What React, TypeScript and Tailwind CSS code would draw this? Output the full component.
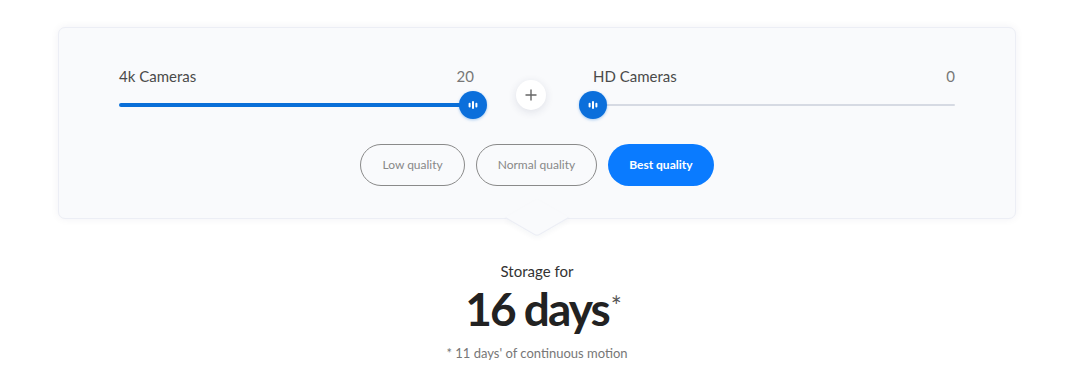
function ThumbIcon() {
  return (
    <svg width="14" height="14" viewBox="0 0 14 14" fill="none">
      <rect x="2.6" y="4.8" width="2" height="4.6" rx="1" fill="#fff" />
      <rect x="6" y="3" width="2" height="8" rx="1" fill="#fff" />
      <rect x="9.4" y="4.8" width="2" height="4.6" rx="1" fill="#fff" />
    </svg>
  );
}

function Thumb({ className }: { className: string }) {
  return (
    <div
      className={`absolute top-0 flex h-7 w-7 items-center justify-center rounded-full bg-[#0b6fdb] shadow-[0_1px_3px_rgba(11,111,219,0.35)] ${className}`}
    >
      <ThumbIcon />
    </div>
  );
}

const qualities = [
  { label: 'Low quality', active: false },
  { label: 'Normal quality', active: false },
  { label: 'Best quality', active: true },
];

export default function App() {
  return (
    <div className="min-h-[378px] w-[1086px] bg-white font-['Lato',sans-serif]">
      <div className="w-[1074px] px-[58px] pt-[27px]">
        <div className="relative rounded-[7px] border border-[#eceef5] bg-[#f9fafc] shadow-[0_0_8px_rgba(30,40,80,0.06)]">
          <div className="relative z-10 flex items-start px-[60px] pt-[38px]">
            <div className="w-[368px]">
              <div className="flex justify-between pr-[13px] text-[15px] leading-5">
                <span className="text-[#4a4a4a]">4k Cameras</span>
                <span className="text-[#777]">20</span>
              </div>
              <div className="relative mt-[5px] h-7">
                <div className="absolute left-0 right-[14px] top-[12px] h-1 rounded-full bg-[#0a6fd8]" />
                <Thumb className="right-0" />
              </div>
            </div>
            <div className="flex w-[92px] justify-center pr-[4px] pt-[14px]">
              <div className="flex h-[30px] w-[30px] items-center justify-center rounded-full bg-white shadow-[0_2px_8px_rgba(30,40,80,0.12)]">
                <svg width="12" height="12" viewBox="0 0 12 12">
                  <path d="M6 0.5v11M0.5 6h11" stroke="#666" strokeWidth="1.4" />
                </svg>
              </div>
            </div>
            <div className="w-[376px]">
              <div className="flex justify-between pl-[14px] text-[15px] leading-5">
                <span className="text-[#4a4a4a]">HD Cameras</span>
                <span className="text-[#777]">0</span>
              </div>
              <div className="relative mt-[5px] h-7">
                <div className="absolute left-[14px] right-0 top-[13px] h-[2px] rounded-full bg-[#d6dae3]" />
                <Thumb className="left-0" />
              </div>
            </div>
          </div>
          <div className="relative z-10 flex justify-center gap-[11px] pb-[32px] pt-[25px]">
            {qualities.map((q) => (
              <button
                key={q.label}
                type="button"
                className={
                  q.active
                    ? 'h-[42px] rounded-full bg-[#0a7bff] px-[21px] text-[12px] font-bold text-white'
                    : 'h-[42px] rounded-full border border-[#8a8a8a] bg-transparent px-[21px] text-[12px] text-[#888]'
                }
              >
                {q.label}
              </button>
            ))}
          </div>
          <div className="absolute bottom-[-33px] left-[445px] flex h-[66px] w-[66px] scale-y-[0.58] items-center justify-center">
            <div className="h-[46px] w-[46px] rotate-45 rounded-br-[5px] border-b-2 border-r-2 border-[#eceef5] bg-[#f9fafc] shadow-[3px_3px_6px_rgba(30,40,80,0.04)]" />
          </div>
        </div>
        <div className="flex flex-col items-center pt-[42px]">
          <p className="text-[15px] leading-5 text-[#333]">Storage for</p>
          <div className="relative">
            <span className="text-[46px] font-bold leading-[56px] tracking-[-2px] text-[#222]">16 days</span>
            <span className="absolute left-full top-[13px] ml-[2px] text-[26px] leading-6 text-[#555]">*</span>
          </div>
          <p className="mt-[8px] text-[13px] leading-4 text-[#777]">* 11 days' of continuous motion</p>
        </div>
      </div>
    </div>
  );
}
